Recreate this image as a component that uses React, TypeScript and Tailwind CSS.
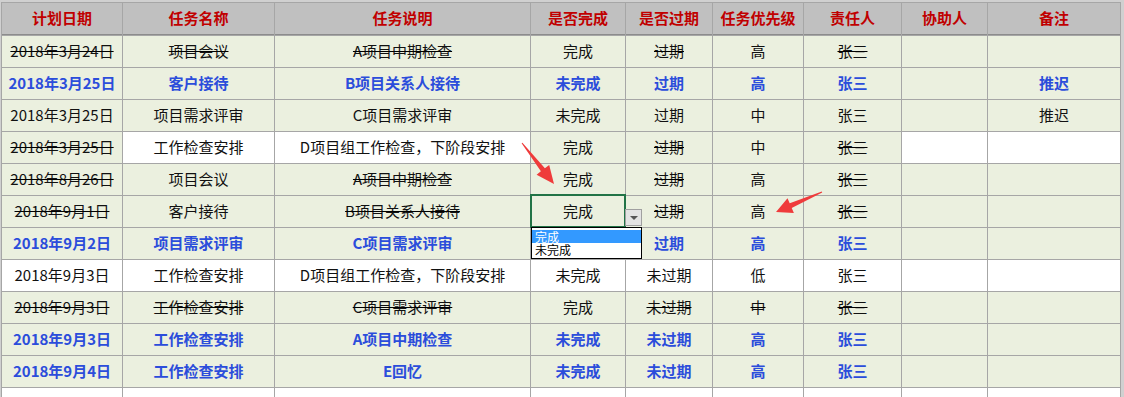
import React from 'react';

type Tone = 'plain' | 'blue' | 'empty';

interface Row {
  cells: string[];
  tone: Tone;
  strike?: number[];
  white?: number[];
}

const headers = ['计划日期', '任务名称', '任务说明', '是否完成', '是否过期', '任务优先级', '责任人', '协助人', '备注'];

const ALL = [0, 1, 2, 3, 4, 5, 6, 7, 8];

const rows: Row[] = [
  { cells: ['2018年3月24日', '项目会议', 'A项目中期检查', '完成', '过期', '高', '张三', '', ''], tone: 'plain', strike: [0, 1, 2, 4, 6] },
  { cells: ['2018年3月25日', '客户接待', 'B项目关系人接待', '未完成', '过期', '高', '张三', '', '推迟'], tone: 'blue' },
  { cells: ['2018年3月25日', '项目需求评审', 'C项目需求评审', '未完成', '过期', '中', '张三', '', '推迟'], tone: 'plain' },
  { cells: ['2018年3月25日', '工作检查安排', 'D项目组工作检查，下阶段安排', '完成', '过期', '中', '张三', '', ''], tone: 'plain', strike: [0, 4, 6], white: [1, 2, 7, 8] },
  { cells: ['2018年8月26日', '项目会议', 'A项目中期检查', '完成', '过期', '高', '张三', '', ''], tone: 'plain', strike: [0, 2, 4, 6] },
  { cells: ['2018年9月1日', '客户接待', 'B项目关系人接待', '完成', '过期', '高', '张三', '', ''], tone: 'plain', strike: [0, 2, 4, 6] },
  // the 是否完成 cell of this row sits under the open dropdown
  { cells: ['2018年9月2日', '项目需求评审', 'C项目需求评审', '', '过期', '高', '张三', '', ''], tone: 'blue' },
  { cells: ['2018年9月3日', '工作检查安排', 'D项目组工作检查，下阶段安排', '未完成', '未过期', '低', '张三', '', ''], tone: 'plain', white: ALL },
  { cells: ['2018年9月3日', '工作检查安排', 'C项目需求评审', '完成', '未过期', '中', '张三', '', ''], tone: 'plain', strike: [0, 1, 2, 4, 5, 6] },
  { cells: ['2018年9月3日', '工作检查安排', 'A项目中期检查', '未完成', '未过期', '高', '张三', '', ''], tone: 'blue' },
  { cells: ['2018年9月4日', '工作检查安排', 'E回忆', '未完成', '未过期', '高', '张三', '', ''], tone: 'blue' },
  { cells: ['', '', '', '', '', '', '', '', ''], tone: 'empty', white: ALL },
];

function Cell({ text, tone, struck, white }: { text: string; tone: Tone; struck: boolean; white: boolean }) {
  return (
    <div
      className={
        'h-[31px] flex items-center justify-center whitespace-nowrap text-[15px] ' +
        (white ? 'bg-white ' : 'bg-[#ebf0df] ') +
        (tone === 'blue' ? 'font-bold text-[#2b4ddb]' : 'text-[#111111]')
      }
    >
      <span className={struck ? 'line-through decoration-black decoration-1' : ''}>{text}</span>
    </div>
  );
}

export default function App() {
  return (
    <div
      className="relative w-[1124px] h-[397px] overflow-hidden bg-[#d0d0d0]"
      style={{ fontFamily: '"Noto Sans CJK SC", "Liberation Sans", sans-serif' }}
    >
      {/* Sheet grid */}
      <div className="ml-px mt-[2px] w-[1120px] bg-[#a6a6a6] p-px">
        <div className="grid grid-cols-[120px_151px_255px_94px_86px_90px_97px_85px_132px] gap-px">
          {headers.map((h) => (
            <div
              key={h}
              className="h-[32px] flex items-center justify-center bg-[#c0c0c0] border-b border-[#8c8c8c] text-[15px] font-bold text-[#c00000]"
            >
              {h}
            </div>
          ))}
          {rows.map((r, i) =>
            r.cells.map((c, j) => (
              <Cell
                key={i + '-' + j}
                text={c}
                tone={r.tone}
                struck={!!r.strike?.includes(j)}
                white={!!r.white?.includes(j)}
              />
            ))
          )}
        </div>
      </div>

      {/* Selected cell */}
      <div className="absolute left-[530px] top-[194px] w-[96px] h-[34px] border-2 border-[#217346]" />

      {/* Dropdown button */}
      <div className="absolute left-[625px] top-[209px] w-[17px] h-[17px] bg-[#e3e3e3] border border-[#a0a0a0] flex items-center justify-center">
        <div className="w-0 h-0 border-l-[4px] border-r-[4px] border-t-[4px] border-l-transparent border-r-transparent border-t-[#555555]" />
      </div>

      {/* Dropdown list */}
      <div className="absolute left-[531px] top-[227px] w-[111px] h-[32px] bg-white border border-black pt-[2px] text-[12px] leading-[13px]">
        <div className="h-[13px] bg-[#3399ff] text-white pl-[3px]">完成</div>
        <div className="h-[14px] text-black pl-[3px]">未完成</div>
      </div>

      {/* Arrows */}
      <svg className="absolute left-0 top-0 pointer-events-none" width="1124" height="397">
        <polygon
          fill="#ef3b3b"
          points="521.6,143.3 540.9,171.3 536.6,174.7 554,184 549.2,164.9 544.9,168.3 522.4,142.7"
        />
        <polygon
          fill="#ef3b3b"
          points="821.8,191.5 789.7,203.3 787.5,198.3 776,212 793.9,212.9 791.7,207.9 822.2,192.5"
        />
      </svg>
    </div>
  );
}
